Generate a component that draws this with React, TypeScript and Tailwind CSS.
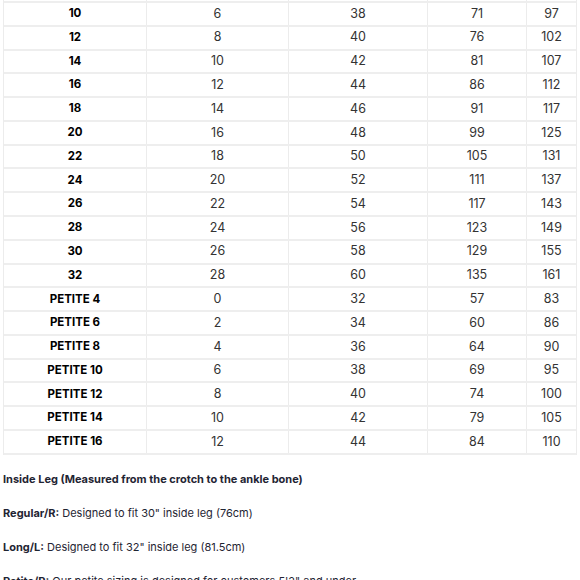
import React from "react";

// Size chart (UK size / US size / EU size / waist cm / hip cm) — cropped view
const rows: [string, string, string, string, string][] = [
  ["", "", "", "", ""],
  ["10", "6", "38", "71", "97"],
  ["12", "8", "40", "76", "102"],
  ["14", "10", "42", "81", "107"],
  ["16", "12", "44", "86", "112"],
  ["18", "14", "46", "91", "117"],
  ["20", "16", "48", "99", "125"],
  ["22", "18", "50", "105", "131"],
  ["24", "20", "52", "111", "137"],
  ["26", "22", "54", "117", "143"],
  ["28", "24", "56", "123", "149"],
  ["30", "26", "58", "129", "155"],
  ["32", "28", "60", "135", "161"],
  ["PETITE 4", "0", "32", "57", "83"],
  ["PETITE 6", "2", "34", "60", "86"],
  ["PETITE 8", "4", "36", "64", "90"],
  ["PETITE 10", "6", "38", "69", "95"],
  ["PETITE 12", "8", "40", "74", "100"],
  ["PETITE 14", "10", "42", "79", "105"],
  ["PETITE 16", "12", "44", "84", "110"],
];

const font = { fontFamily: "Inter, 'Open Sans', sans-serif" };

const App: React.FC = () => {
  return (
    <div className="w-[580px] h-[580px] overflow-hidden bg-white" style={font}>
      {/* Table (first row scrolled mostly out of view) */}
      <div className="mt-[-20.8px] mx-[3px] border-l-[1.5px] border-r-[1.5px] border-[#ececec]">
        {rows.map((r, i) => (
          <div
            key={i}
            className="grid grid-cols-[143px_142px_139px_99px_1fr] h-[23.79px] border-b-2 border-[#eeeeee] text-[12.5px] leading-none"
          >
            <div className="flex items-center justify-center border-r border-[#ececec] font-bold text-[11.5px] text-black">
              {r[0]}
            </div>
            <div className="flex items-center justify-center border-r border-[#ececec] text-[#333]">
              {r[1]}
            </div>
            <div className="flex items-center justify-center border-r border-[#ececec] text-[#333]">
              {r[2]}
            </div>
            <div className="flex items-center justify-center border-r border-[#ececec] text-[#333]">
              {r[3]}
            </div>
            <div className="flex items-center justify-center text-[#333]">{r[4]}</div>
          </div>
        ))}
      </div>

      {/* Notes */}
      <div className="pl-[3px] mt-[15px] flex flex-col gap-[16px] text-[11px] leading-[18px] text-[#1f2533]">
        <p className="font-bold">Inside Leg (Measured from the crotch to the ankle bone)</p>
        <p>
          <strong>Regular/R:</strong> Designed to fit 30" inside leg (76cm)
        </p>
        <p>
          <strong>Long/L:</strong> Designed to fit 32" inside leg (81.5cm)
        </p>
        <p>
          <strong>Petite/P:</strong> Our petite sizing is designed for customers 5'2" and under.
        </p>
      </div>
    </div>
  );
};

export default App;
